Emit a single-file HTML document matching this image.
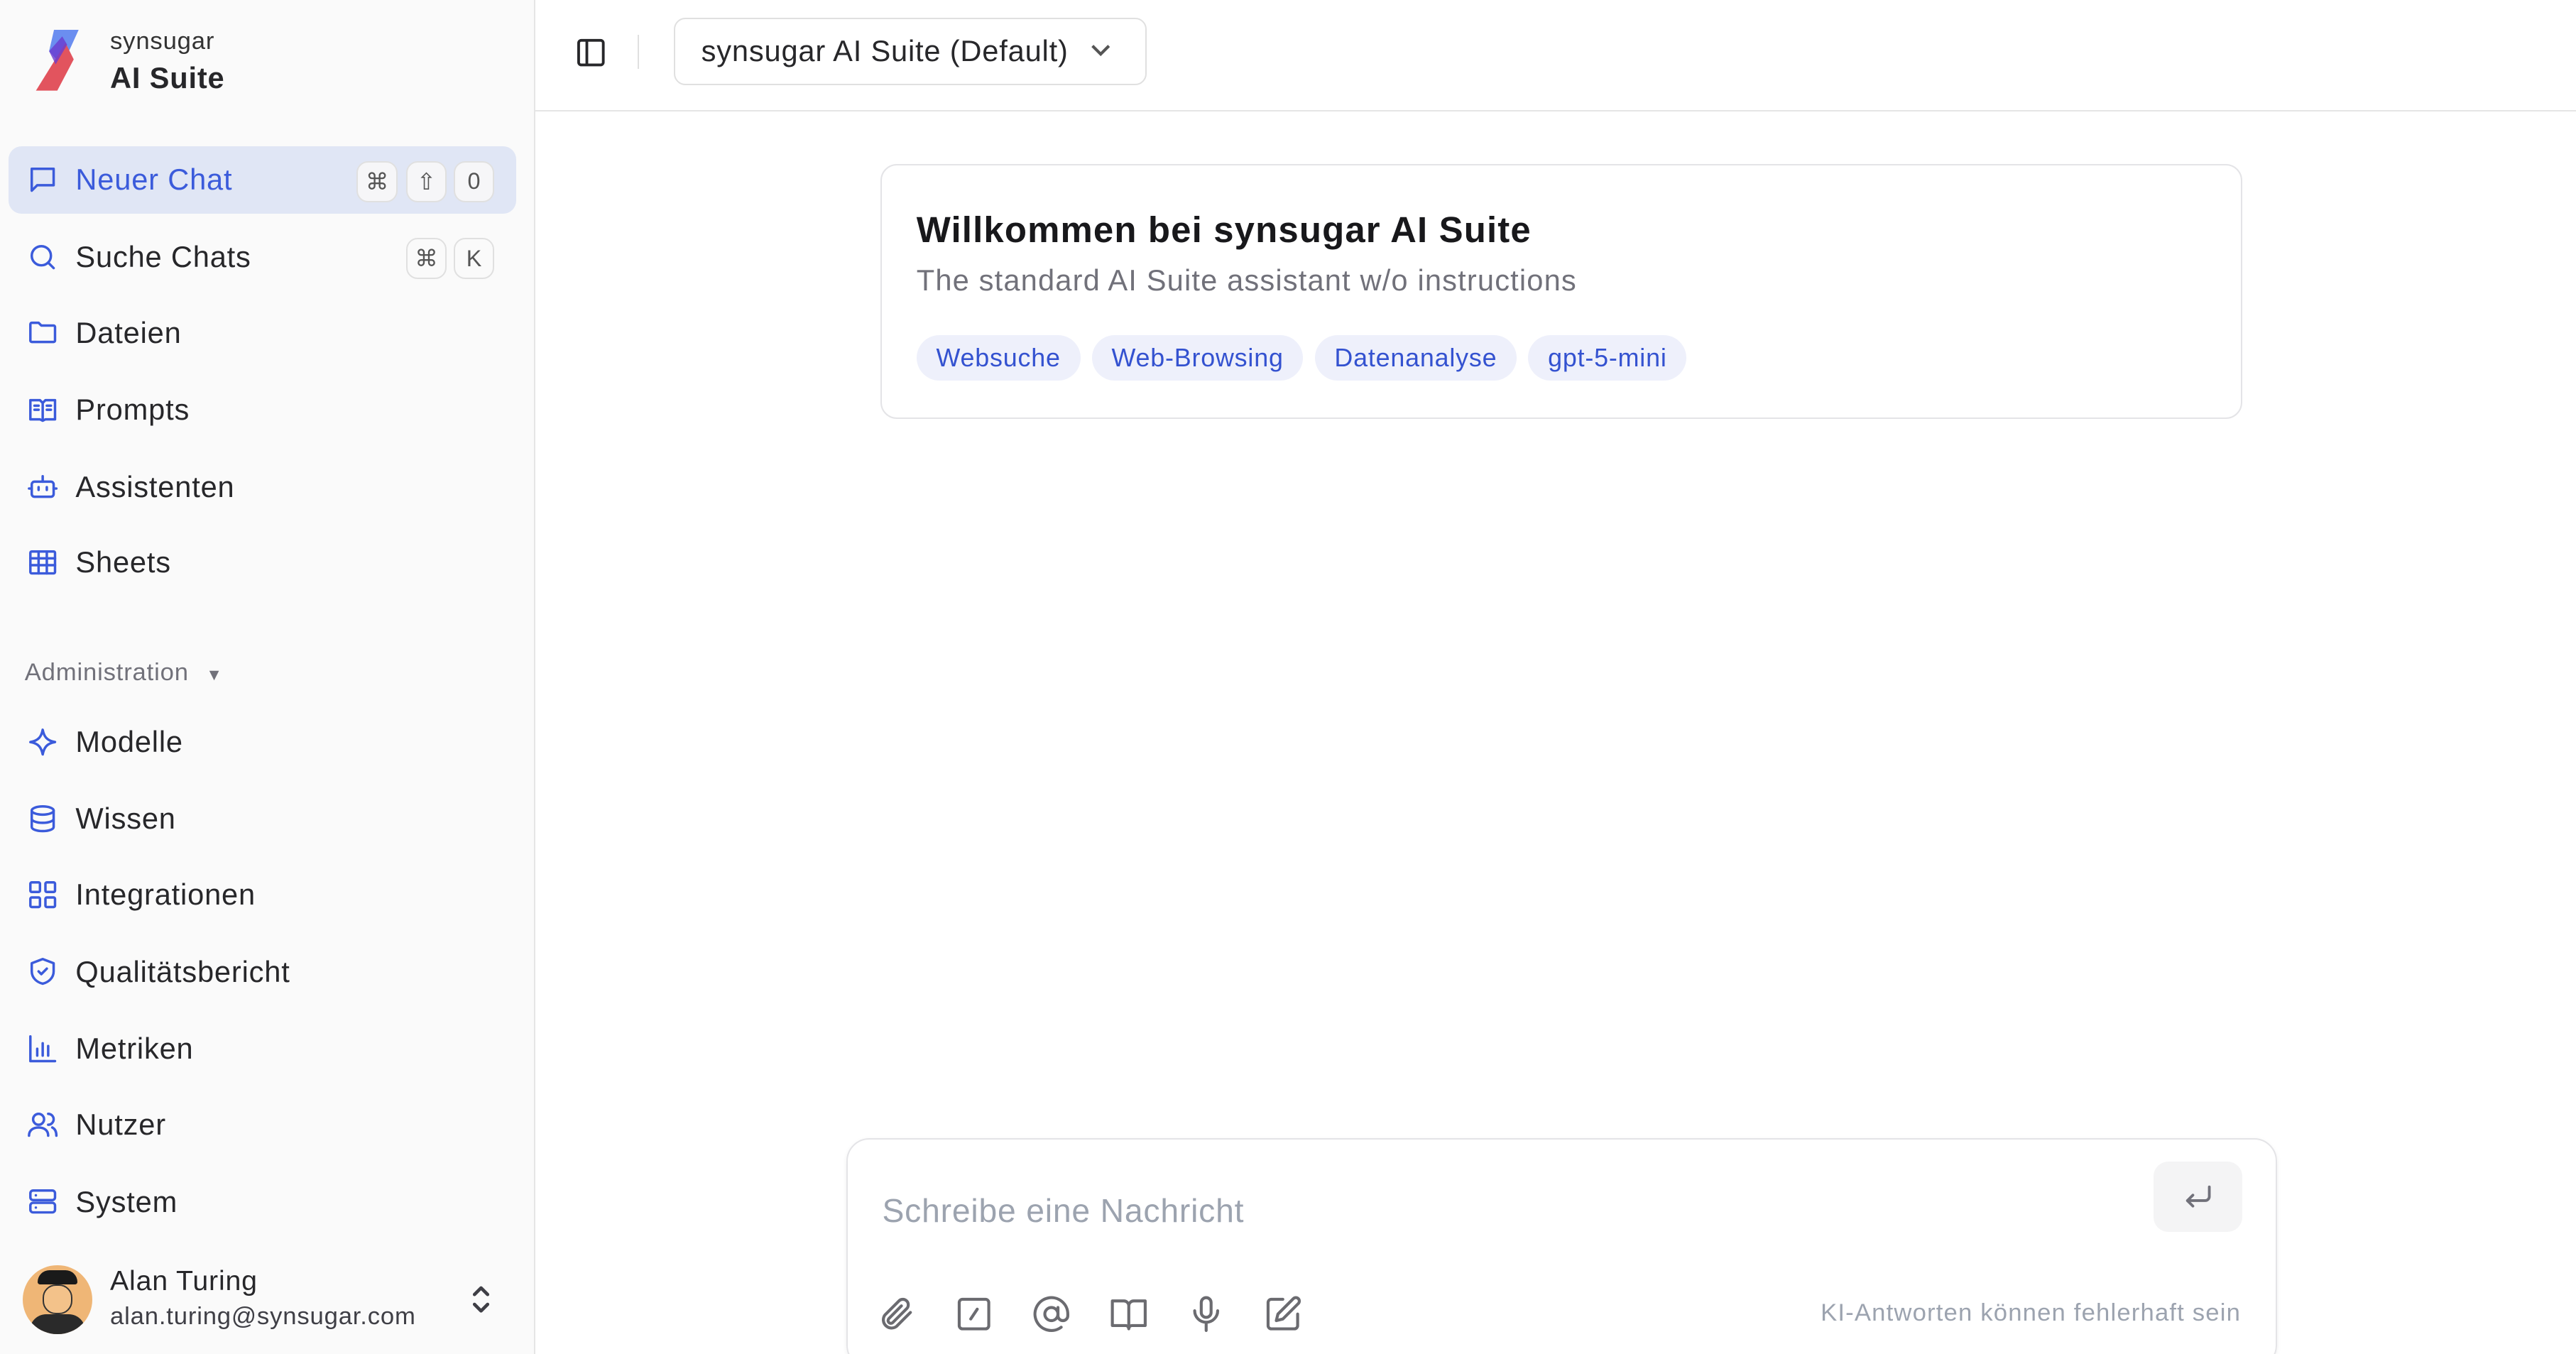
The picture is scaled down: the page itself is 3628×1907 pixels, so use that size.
<!DOCTYPE html>
<html><head><meta charset="utf-8"><style>
html{zoom:2.3138;overflow:hidden;height:824px}
*{box-sizing:border-box;margin:0;padding:0}
body{width:1568px;height:824px;overflow:hidden;background:#fff;font-family:"Liberation Sans",sans-serif;color:#27272a;position:relative;letter-spacing:.35px}
.sb{position:absolute;left:0;top:0;width:326px;height:824px;background:#fafafa;border-right:1px solid #e5e5e5}
.it{position:absolute;left:5px;width:309px;height:41px;border-radius:8px;display:flex;align-items:center;font-size:18px;color:#27272a}
.it svg{position:absolute;left:11px;width:20px;height:20px;fill:none;stroke:#3b5bdb;stroke-width:1.8;stroke-linecap:round;stroke-linejoin:round}
.it span{position:absolute;left:41px}
.kb{position:absolute;top:9px;width:25px;height:25px;border:1px solid #e0e0e0;border-radius:7px;font-size:14px;color:#555;display:flex;align-items:center;justify-content:center;background:#f6f6f8;letter-spacing:0}
.chip{display:inline-block;background:#eef0fb;color:#3452d0;font-size:15.5px;padding:5px 12px;border-radius:14px;margin-right:7px}
.ic{position:absolute;top:788px;width:24px;height:24px;fill:none;stroke:#6b6b70;stroke-width:1.8;stroke-linecap:round;stroke-linejoin:round}
</style></head><body>
<div class="sb">
 <svg style="position:absolute;left:20px;top:18px" width="32" height="38" viewBox="0 0 32 38"><path d="M13 0h15l-10 22-8-9z" fill="#6b8ef0"/><path d="M2 37h13l10-19-5-10z" fill="#e2545e"/><path d="M10 13l8 -9 3 5-7 12z" fill="#6a3bd0" opacity=".8"/></svg>
 <div style="position:absolute;left:67px;top:17px;font-size:15px;color:#333">synsugar</div>
 <div style="position:absolute;left:67px;top:37px;font-size:18px;font-weight:bold;color:#27272a">AI Suite</div>

 <div class="it" style="top:89px;background:#e0e6f5;color:#3b5bdb"><svg viewBox="0 0 24 24"><path d="M4 4h16v12H8l-4 4z"/></svg><span>Neuer Chat</span>
  <div class="kb" style="left:212px">⌘</div><div class="kb" style="left:242px">⇧</div><div class="kb" style="left:271px">0</div></div>
 <div class="it" style="top:136px"><svg viewBox="0 0 24 24"><circle cx="11" cy="11" r="7"/><path d="M16 16l4 4"/></svg><span>Suche Chats</span>
  <div class="kb" style="left:242px;background:#fafafa">⌘</div><div class="kb" style="left:271px;background:#fafafa">K</div></div>
 <div class="it" style="top:182px"><svg viewBox="0 0 24 24"><path d="M3 6a1 1 0 011-1h5l2 2h9a1 1 0 011 1v10a1 1 0 01-1 1H4a1 1 0 01-1-1z"/></svg><span>Dateien</span></div>
 <div class="it" style="top:229px"><svg viewBox="0 0 24 24"><path d="M3 5h7l2 2 2-2h7v14h-7l-2 1-2-1H3zM12 7v13M6 9h3M6 12h3M15 9h3M15 12h3"/></svg><span>Prompts</span></div>
 <div class="it" style="top:276px"><svg viewBox="0 0 24 24"><rect x="4" y="8" width="16" height="11" rx="2"/><path d="M12 4v4M2 13h2M20 13h2M9 12v2M15 12v2"/></svg><span>Assistenten</span></div>
 <div class="it" style="top:322px"><svg viewBox="0 0 24 24"><rect x="3" y="4" width="18" height="16" rx="1"/><path d="M3 9h18M3 14h18M9 4v16M15 4v16"/></svg><span>Sheets</span></div>

 <div style="position:absolute;left:15px;top:401px;font-size:15px;color:#71717a">Administration <span style="font-size:10px;margin-left:6px">▼</span></div>

 <div class="it" style="top:431px"><svg viewBox="0 0 24 24"><path d="M12 3c1 5 3 8 9 9-6 1-8 4-9 9-1-5-3-8-9-9 6-1 8-4 9-9z"/></svg><span>Modelle</span></div>
 <div class="it" style="top:478px"><svg viewBox="0 0 24 24"><ellipse cx="12" cy="6" rx="8" ry="3"/><path d="M4 6v12c0 1.7 3.6 3 8 3s8-1.3 8-3V6M4 12c0 1.7 3.6 3 8 3s8-1.3 8-3"/></svg><span>Wissen</span></div>
 <div class="it" style="top:524px"><svg viewBox="0 0 24 24"><rect x="3" y="3" width="7" height="7" rx="1"/><rect x="14" y="3" width="7" height="7" rx="1"/><rect x="3" y="14" width="7" height="7" rx="1"/><rect x="14" y="14" width="7" height="7" rx="1"/></svg><span>Integrationen</span></div>
 <div class="it" style="top:571px"><svg viewBox="0 0 24 24"><path d="M12 3l8 3v6c0 5-4 8-8 9-4-1-8-4-8-9V6z"/><path d="M9 12l2 2 4-4"/></svg><span>Qualitätsbericht</span></div>
 <div class="it" style="top:618px"><svg viewBox="0 0 24 24"><path d="M3 3v18h18M8 17v-5M12 17V8M16 17v-7"/></svg><span>Metriken</span></div>
 <div class="it" style="top:664px"><svg viewBox="0 0 24 24"><circle cx="9" cy="8" r="4"/><path d="M2 20c0-4 3-6 7-6s7 2 7 6M16 4a4 4 0 010 8M19 14c2 1 3 3 3 6"/></svg><span>Nutzer</span></div>
 <div class="it" style="top:711px"><svg viewBox="0 0 24 24"><rect x="3" y="4" width="18" height="7" rx="2"/><rect x="3" y="13" width="18" height="7" rx="2"/><path d="M7 7.5h.01M7 16.5h.01"/></svg><span>System</span></div>

 <div style="position:absolute;left:14px;top:770px;width:42px;height:42px;border-radius:50%;background:#efb676;overflow:hidden">
  <div style="position:absolute;left:9px;top:3px;width:24px;height:9px;background:#1a1a1a;border-radius:10px 10px 2px 2px"></div>
  <div style="position:absolute;left:12px;top:12px;width:18px;height:18px;background:#f3c28a;border:1px solid #333;border-radius:45%"></div>
  <div style="position:absolute;left:4px;top:30px;width:34px;height:14px;background:#2a2a2a;border-radius:10px 10px 0 0"></div>
 </div>
 <div style="position:absolute;left:67px;top:770px;font-size:17px;color:#27272a">Alan Turing</div>
 <div style="position:absolute;left:67px;top:793px;font-size:15px;color:#3f3f46">alan.turing@synsugar.com</div>
 <svg style="position:absolute;left:285px;top:781px" width="16" height="20" viewBox="0 0 16 20" fill="none" stroke="#3f3f46" stroke-width="2" stroke-linecap="round" stroke-linejoin="round"><path d="M4 7l4-4 4 4M4 13l4 4 4-4"/></svg>
</div>

<div style="position:absolute;left:326px;top:0;width:1242px;height:68px;border-bottom:1px solid #e5e5e5"></div>
<svg style="position:absolute;left:349px;top:22px" width="21" height="20" viewBox="0 0 24 24" fill="none" stroke="#27272a" stroke-width="2"><rect x="3" y="3" width="18" height="18" rx="2"/><path d="M9 3v18"/></svg>
<div style="position:absolute;left:388px;top:21px;width:1px;height:21px;background:#e0e0e0"></div>
<div style="position:absolute;left:410px;top:11px;width:288px;height:41px;border:1px solid #e0e0e0;border-radius:7px;font-size:18px;padding:9px 0 0 16px">synsugar AI Suite (Default)
 <svg style="position:absolute;left:252px;top:14px" width="14" height="10" viewBox="0 0 14 10" fill="none" stroke="#555" stroke-width="1.8"><path d="M2 2l5 5 5-5"/></svg></div>

<div style="position:absolute;left:536px;top:100px;width:829px;height:155px;border:1px solid #e4e4e7;border-radius:10px;padding:26px 21px">
 <div style="font-size:22px;font-weight:bold;color:#18181b;letter-spacing:.5px">Willkommen bei synsugar AI Suite</div>
 <div style="font-size:18px;color:#71717a;margin-top:8px;letter-spacing:.5px">The standard AI Suite assistant w/o instructions</div>
 <div style="margin-top:23px"><span class="chip">Websuche</span><span class="chip">Web-Browsing</span><span class="chip">Datenanalyse</span><span class="chip">gpt-5-mini</span></div>
</div>

<div style="position:absolute;left:515px;top:693px;width:871px;height:140px;border:1px solid #e4e4e7;border-radius:14px;box-shadow:0 1px 3px rgba(0,0,0,.06)"></div>
<div style="position:absolute;left:537px;top:725px;font-size:20px;color:#9ca3af">Schreibe eine Nachricht</div>
<div style="position:absolute;left:1311px;top:707px;width:54px;height:43px;border-radius:9px;background:#f4f4f5"></div>
<svg style="position:absolute;left:1328px;top:719px" width="20" height="20" viewBox="0 0 24 24" fill="none" stroke="#71717a" stroke-width="2" stroke-linecap="round" stroke-linejoin="round"><path d="M20 4v7a3 3 0 01-3 3H4M8 10l-4 4 4 4"/></svg>

<svg class="ic" style="left:534px" viewBox="0 0 24 24"><path d="M20 11l-8.5 8.5a5 5 0 01-7-7L13 4a3.3 3.3 0 014.7 4.7L9.2 17.2a1.7 1.7 0 01-2.4-2.4L14.5 7"/></svg>
<svg class="ic" style="left:581px" viewBox="0 0 24 24"><rect x="3" y="3" width="18" height="18" rx="2"/><path d="M10 15l4-6"/></svg>
<svg class="ic" style="left:628px" viewBox="0 0 24 24"><circle cx="12" cy="12" r="4"/><path d="M16 8v5a3 3 0 006 0v-1a10 10 0 10-4 8"/></svg>
<svg class="ic" style="left:675px" viewBox="0 0 24 24"><path d="M2 4h7a3 3 0 013 3v14a2 2 0 00-2-2H2zM22 4h-7a3 3 0 00-3 3v14a2 2 0 012-2h8z"/></svg>
<svg class="ic" style="left:722px" viewBox="0 0 24 24"><rect x="9" y="2" width="6" height="12" rx="3"/><path d="M5 10a7 7 0 0014 0M12 17v5"/></svg>
<svg class="ic" style="left:769px" viewBox="0 0 24 24"><path d="M12 3H5a2 2 0 00-2 2v14a2 2 0 002 2h14a2 2 0 002-2v-7"/><path d="M18.4 2.6a2 2 0 013 3L12 15l-4 1 1-4z"/></svg>
<div style="position:absolute;right:204px;top:791px;font-size:15px;color:#9ca3af;letter-spacing:.5px">KI-Antworten können fehlerhaft sein</div>
</body></html>
